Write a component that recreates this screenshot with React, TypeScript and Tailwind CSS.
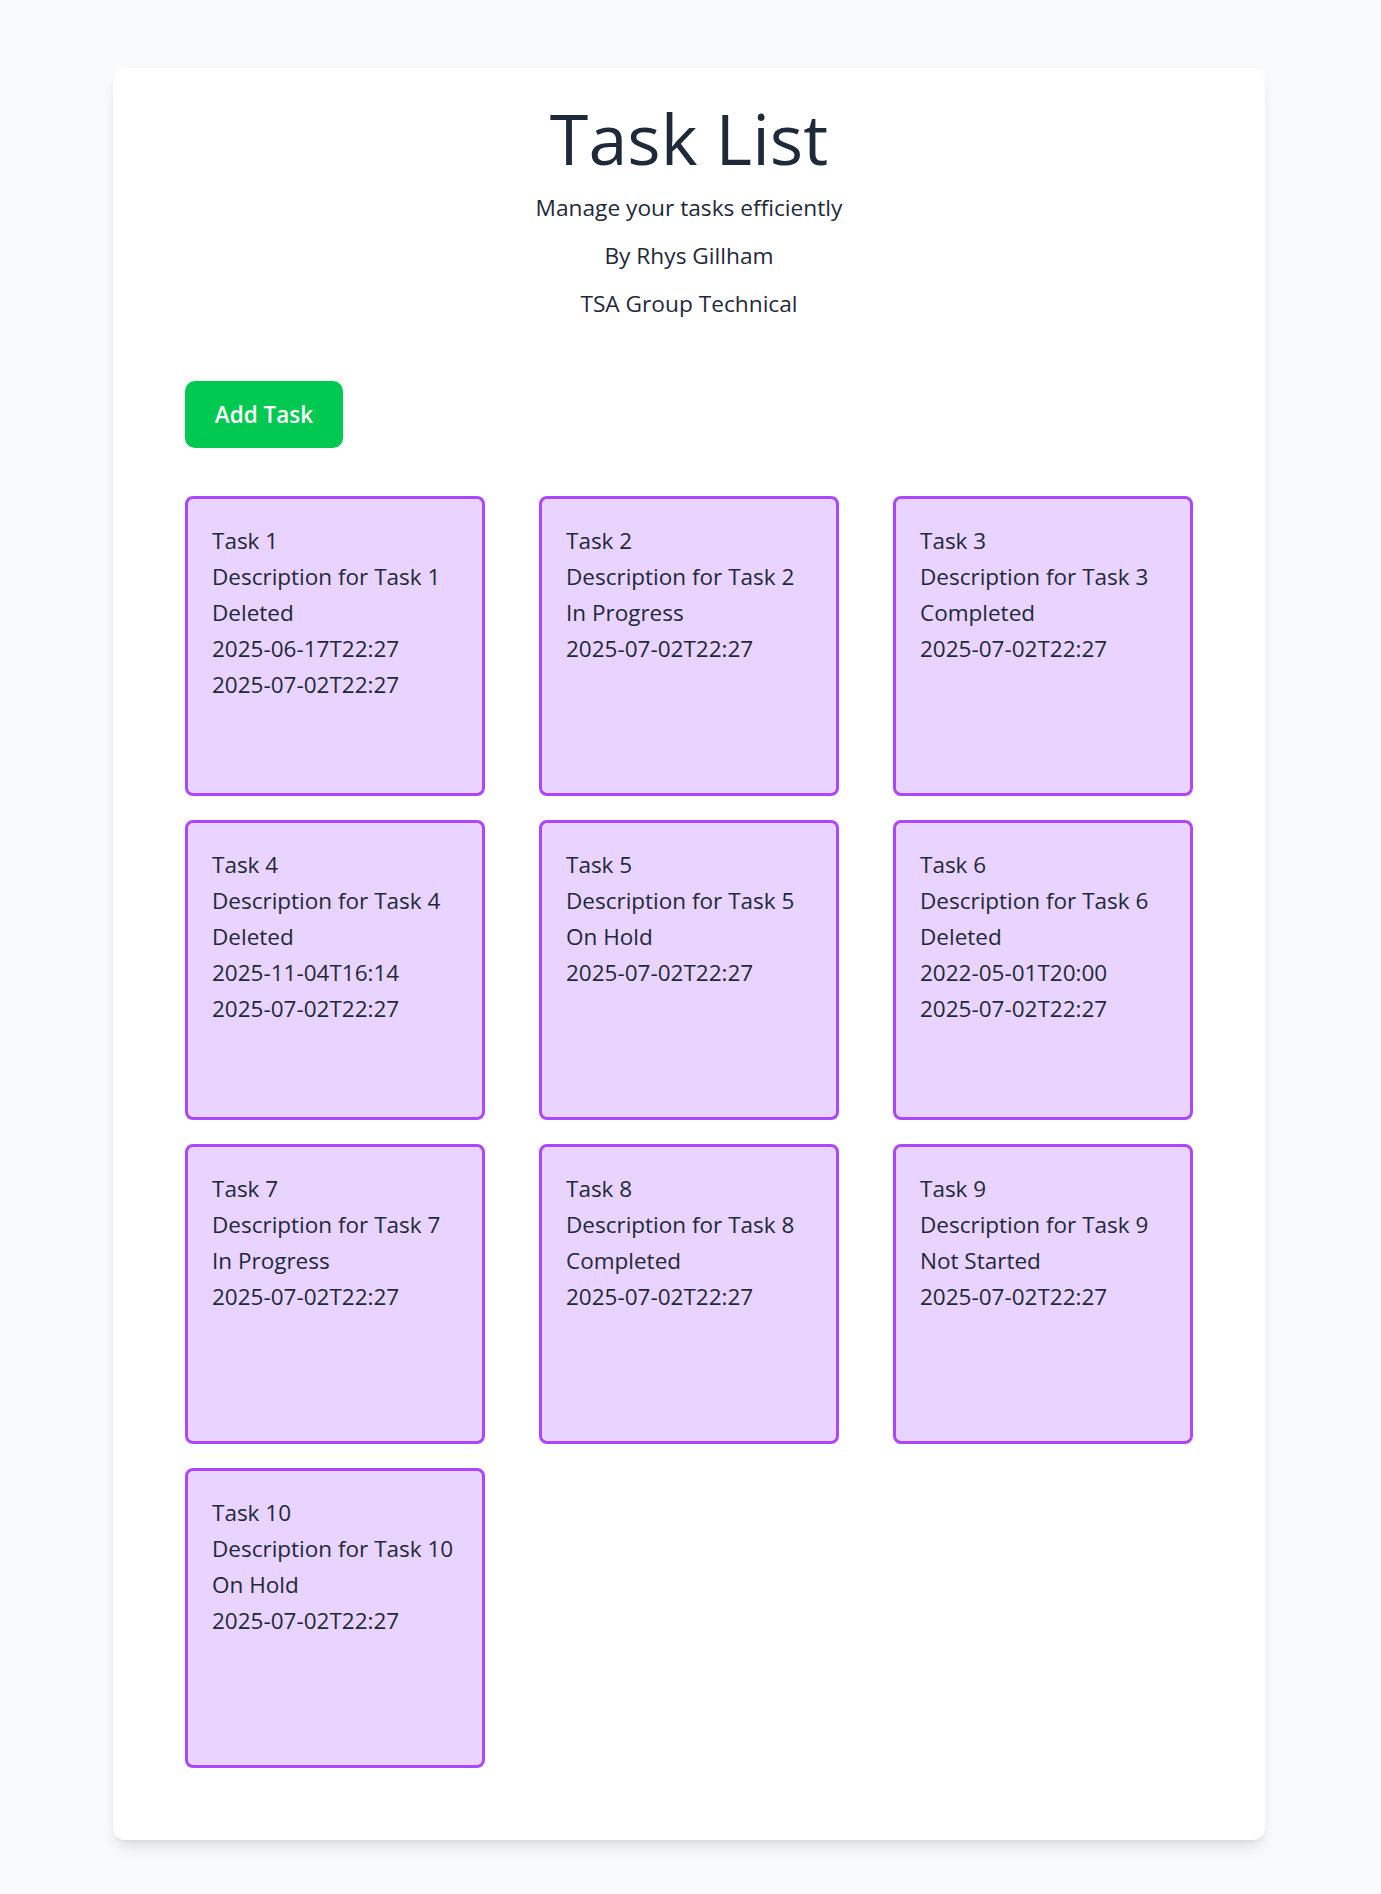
import React from "react";

type Task = {
    title: string;
    description: string;
    status: string;
    dates: string[];
};

const tasks: Task[] = [
    { title: "Task 1", description: "Description for Task 1", status: "Deleted", dates: ["2025-06-17T22:27", "2025-07-02T22:27"] },
    { title: "Task 2", description: "Description for Task 2", status: "In Progress", dates: ["2025-07-02T22:27"] },
    { title: "Task 3", description: "Description for Task 3", status: "Completed", dates: ["2025-07-02T22:27"] },
    { title: "Task 4", description: "Description for Task 4", status: "Deleted", dates: ["2025-11-04T16:14", "2025-07-02T22:27"] },
    { title: "Task 5", description: "Description for Task 5", status: "On Hold", dates: ["2025-07-02T22:27"] },
    { title: "Task 6", description: "Description for Task 6", status: "Deleted", dates: ["2022-05-01T20:00", "2025-07-02T22:27"] },
    { title: "Task 7", description: "Description for Task 7", status: "In Progress", dates: ["2025-07-02T22:27"] },
    { title: "Task 8", description: "Description for Task 8", status: "Completed", dates: ["2025-07-02T22:27"] },
    { title: "Task 9", description: "Description for Task 9", status: "Not Started", dates: ["2025-07-02T22:27"] },
    { title: "Task 10", description: "Description for Task 10", status: "On Hold", dates: ["2025-07-02T22:27"] },
];

function TaskCard({ task }: { task: Task }) {
    return (
        <div className="w-[300px] h-[300px] bg-purple-200 border-[3px] border-purple-500 rounded-lg p-6 text-[22.5px] leading-9 text-gray-800">
            <div>{task.title}</div>
            <div>{task.description}</div>
            <div>{task.status}</div>
            {task.dates.map((d, i) => (
                <div key={i}>{d}</div>
            ))}
        </div>
    );
}

export default function App() {
    return (
        <div className="min-h-screen bg-gray-50 pt-[68px] pb-[55px] pr-[3px] font-['Open_Sans',sans-serif]">
            <div className="max-w-6xl mx-auto bg-white rounded-xl shadow-lg px-18 pt-8 pb-18">
                <header className="flex flex-col items-center gap-4 text-gray-800">
                    <h1 className="text-[70px] leading-[76px]">Task List</h1>
                    <p className="text-[22.7px] leading-8">Manage your tasks efficiently</p>
                    <p className="text-[22.7px] leading-8">By Rhys Gillham</p>
                    <p className="text-[22.7px] leading-8">TSA Group Technical</p>
                </header>

                <button className="mt-[61px] bg-green-500 text-white text-[22.5px] font-semibold rounded-[10px] w-[158px] h-[67px]">
                    Add Task
                </button>

                <div className="mt-12 flex flex-wrap justify-between gap-y-6">
                    {tasks.map((t) => (
                        <TaskCard key={t.title} task={t} />
                    ))}
                </div>
            </div>
        </div>
    );
}
